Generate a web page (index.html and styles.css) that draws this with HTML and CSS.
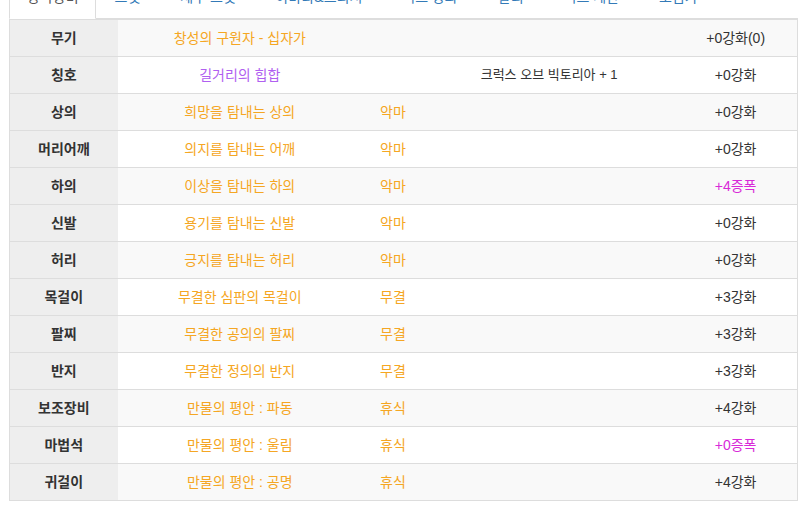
FILE: index.html
```html
<!DOCTYPE html>
<html lang="ko">
<head>
    <meta charset="UTF-8">
    <title>장착장비</title>
    <link rel="stylesheet" href="styles.css">
</head>
<body>
    <div class="wrap">
        <!-- Tabs -->
        <ul class="nav-tabs">
            <li class="tab active"><a href="#">장착장비</a></li>
            <li class="tab"><a href="#">스탯</a></li>
            <li class="tab"><a href="#">세부 스탯</a></li>
            <li class="tab"><a href="#">아바타&amp;크리쳐</a></li>
            <li class="tab"><a href="#">버프 강화</a></li>
            <li class="tab"><a href="#">탈리</a></li>
            <li class="tab"><a href="#">버프 계산</a></li>
            <li class="tab"><a href="#">모험가</a></li>
        </ul>

        <!-- Equipment table -->
        <table class="equip">
            <colgroup>
                <col class="c-slot">
                <col class="c-name">
                <col class="c-type">
                <col class="c-extra">
                <col class="c-up">
            </colgroup>
            <tr>
                <th>무기</th>
                <td class="orange">창성의 구원자 - 십자가</td>
                <td></td>
                <td></td>
                <td>+0강화(0)</td>
            </tr>
            <tr>
                <th>칭호</th>
                <td class="purple">길거리의 힙합</td>
                <td></td>
                <td class="small">크럭스 오브 빅토리아 + 1</td>
                <td>+0강화</td>
            </tr>
            <tr>
                <th>상의</th>
                <td class="orange">희망을 탐내는 상의</td>
                <td class="orange">악마</td>
                <td></td>
                <td>+0강화</td>
            </tr>
            <tr>
                <th>머리어깨</th>
                <td class="orange">의지를 탐내는 어깨</td>
                <td class="orange">악마</td>
                <td></td>
                <td>+0강화</td>
            </tr>
            <tr>
                <th>하의</th>
                <td class="orange">이상을 탐내는 하의</td>
                <td class="orange">악마</td>
                <td></td>
                <td class="magenta">+4증폭</td>
            </tr>
            <tr>
                <th>신발</th>
                <td class="orange">용기를 탐내는 신발</td>
                <td class="orange">악마</td>
                <td></td>
                <td>+0강화</td>
            </tr>
            <tr>
                <th>허리</th>
                <td class="orange">긍지를 탐내는 허리</td>
                <td class="orange">악마</td>
                <td></td>
                <td>+0강화</td>
            </tr>
            <tr>
                <th>목걸이</th>
                <td class="orange">무결한 심판의 목걸이</td>
                <td class="orange">무결</td>
                <td></td>
                <td>+3강화</td>
            </tr>
            <tr>
                <th>팔찌</th>
                <td class="orange">무결한 공의의 팔찌</td>
                <td class="orange">무결</td>
                <td></td>
                <td>+3강화</td>
            </tr>
            <tr>
                <th>반지</th>
                <td class="orange">무결한 정의의 반지</td>
                <td class="orange">무결</td>
                <td></td>
                <td>+3강화</td>
            </tr>
            <tr>
                <th>보조장비</th>
                <td class="orange">만물의 평안 : 파동</td>
                <td class="orange">휴식</td>
                <td></td>
                <td>+4강화</td>
            </tr>
            <tr>
                <th>마법석</th>
                <td class="orange">만물의 평안 : 울림</td>
                <td class="orange">휴식</td>
                <td></td>
                <td class="magenta">+0증폭</td>
            </tr>
            <tr>
                <th>귀걸이</th>
                <td class="orange">만물의 평안 : 공명</td>
                <td class="orange">휴식</td>
                <td></td>
                <td>+4강화</td>
            </tr>
        </table>
    </div>
</body>
</html>
```

FILE: styles.css
```css
* {
    margin: 0;
    padding: 0;
    box-sizing: border-box;
}

body {
    font-family: "Liberation Sans", "Noto Sans CJK KR", sans-serif;
    font-size: 14px;
    line-height: 20px;
    color: #333;
    background: #fff;
    overflow: hidden;
}

/* page is scrolled a little, tabs are half out of view */
.wrap {
    margin-top: -24px;
    padding: 0 8px 0 9px;
}

/* Tabs */
.nav-tabs {
    list-style: none;
    display: flex;
    border-bottom: 1px solid #ddd;
}

.tab {
    margin-bottom: -1px;
}

.tab a {
    display: block;
    padding: 10px 18px 11px;
    margin-right: 2px;
    border: 1px solid transparent;
    border-radius: 4px 4px 0 0;
    color: #337ab7;
    text-decoration: none;
}

.tab.active a {
    padding: 10px 16px 11px 17px;
    color: #555;
    background: #fff;
    border-color: #ddd #ddd transparent;
}

.tab:nth-child(2) a {
    padding-left: 16px;
}

/* Table */
.equip {
    width: 100%;
    table-layout: fixed;
    border-collapse: collapse;
    border: 1px solid #ddd;
}

.c-slot { width: 108px; }
.c-name { width: 244px; }
.c-type { width: 62px; }
.c-extra { width: 250px; }
.c-up { width: 123px; }

.equip th,
.equip td {
    padding: 8px;
    height: 37px;
    text-align: center;
    vertical-align: middle;
    border-top: 1px solid #ddd;
    white-space: nowrap;
}

.equip th {
    background: #eee;
    font-weight: bold;
}

.equip tr:nth-child(odd) td {
    background: #f9f9f9;
}

.equip tr:nth-child(even) td {
    background: #fff;
}

.equip td.small {
    font-size: 13px;
}

.orange {
    color: #f5a623;
}

.purple {
    color: #b060f0;
}

.magenta {
    color: #d82ad8;
}
```
